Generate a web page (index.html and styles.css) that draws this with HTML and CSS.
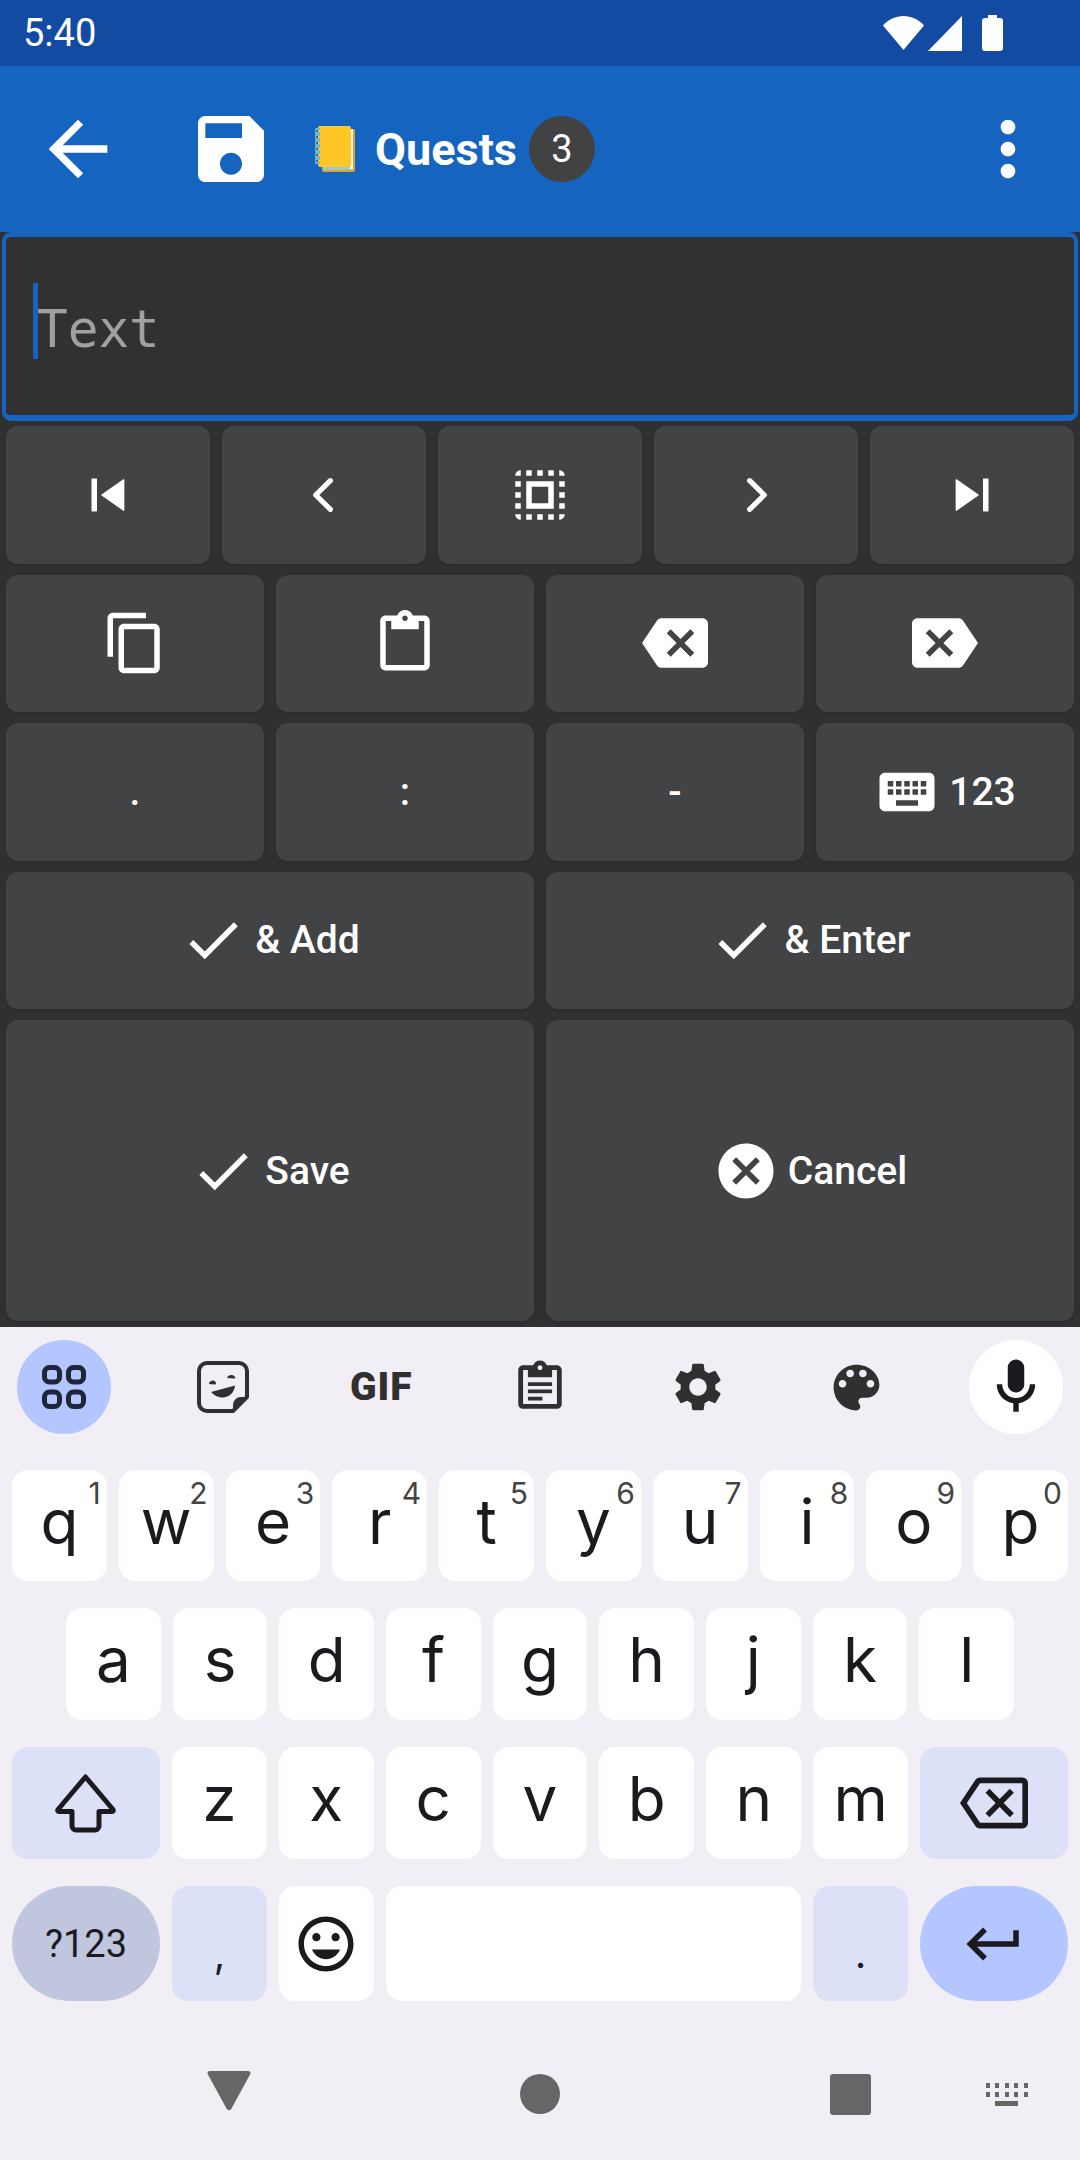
FILE: index.html
```html
<!DOCTYPE html>
<html lang="en">
<head>
<meta charset="utf-8">
<title>Quests</title>
<link rel="stylesheet" href="styles.css">
</head>
<body>
<div class="status">
  <span class="clock">5:40</span>
  <div class="status-icons">
    <svg class="st-wifi" viewBox="0 0 41 34"><path d="M0 9.500C5.500 3.500 12.500 0 20.500 0S35.500 3.500 41 9.500L20.500 34z"/></svg>
    <svg class="st-signal" viewBox="0 0 34 35"><path d="M34 0v35H0z"/></svg>
    <svg class="st-batt" viewBox="0 0 21 36"><path d="M6 0h9v3h3a3 3 0 0 1 3 3v27a3 3 0 0 1-3 3H3a3 3 0 0 1-3-3V6a3 3 0 0 1 3-3h3z"/></svg>
  </div>
</div>

<header class="appbar">
  <svg class="ic ic-88" viewBox="0 0 24 24"><path d="M20 11H7.830l5.590-5.590L12 4l-8 8 8 8 1.410-1.410L7.830 13H20v-2z"/></svg>
  <svg class="ic ic-88 save" viewBox="0 0 24 24"><path d="M17 3H5c-1.110 0-2 .9-2 2v14c0 1.100.89 2 2 2h14c1.100 0 2-.9 2-2V7l-4-4zm-5 16c-1.660 0-3-1.340-3-3s1.340-3 3-3 3 1.340 3 3-1.340 3-3 3zm3-10H5V5h10v4z"/></svg>
  <svg class="notebook" viewBox="0 0 41 48">
    <rect x="7" y="4" width="33" height="43" rx="2" fill="#e0a526"/>
    <rect x="8" y="38" width="30" height="7" fill="#9fc9cf"/>
    <rect x="35" y="4" width="3" height="40" fill="#f4f4f4"/>
    <rect x="3" y="1" width="33" height="41" rx="2" fill="#ffc627"/>
    <path d="M5 4H2a1.500 1.500 0 0 0 0 4h3M5 10H2a1.500 1.500 0 0 0 0 4h3M5 16H2a1.500 1.500 0 0 0 0 4h3M5 22H2a1.500 1.500 0 0 0 0 4h3M5 28H2a1.500 1.500 0 0 0 0 4h3M5 34H2a1.500 1.500 0 0 0 0 4h3" fill="none" stroke="#74b8c9" stroke-width="2"/>
  </svg>
  <h1 class="title">Quests</h1>
  <span class="badge">3</span>
  <svg class="ic ic-88 more" viewBox="0 0 24 24"><path d="M12 8c1.100 0 2-.9 2-2s-.9-2-2-2-2 .9-2 2 .9 2 2 2zm0 2c-1.100 0-2 .9-2 2s.9 2 2 2 2-.9 2-2-.9-2-2-2zm0 6c-1.100 0-2 .9-2 2s.9 2 2 2 2-.9 2-2-.9-2-2-2z"/></svg>
</header>

<main class="panel">
  <div class="editor"><span class="caret"></span><span class="placeholder">Text</span></div>
  <div class="pad">
    <div class="pad-row">
      <button class="btn"><svg class="ic ic-66" viewBox="0 0 24 24"><path class="soft" d="M6.250 6.250h1.500v11.500h-1.500zM9.800 12l7.900 5.500V6.500z"/></svg></button>
      <button class="btn"><svg class="ic ic-66" viewBox="0 0 24 24"><path class="chev" d="M14.300 6.800 9 12l5.300 5.200"/></svg></button>
      <button class="btn"><svg class="ic ic-66" viewBox="0 0 24 24"><path d="M3 5h2V3c-1.100 0-2 .9-2 2zm0 8h2v-2H3v2zm4 8h2v-2H7v2zM3 9h2V7H3v2zm10-6h-2v2h2V3zm6 0v2h2c0-1.100-.9-2-2-2zM5 21v-2H3c0 1.100.9 2 2 2zm-2-4h2v-2H3v2zM9 3H7v2h2V3zm2 18h2v-2h-2v2zm8-8h2v-2h-2v2zm0 8c1.100 0 2-.9 2-2h-2v2zm0-12h2V7h-2v2zm0 8h2v-2h-2v2zm-4 4h2v-2h-2v2zm0-16h2V3h-2v2zM7 17h10V7H7v10zm2-8h6v6H9V9z"/></svg></button>
      <button class="btn"><svg class="ic ic-66" viewBox="0 0 24 24"><path class="chev" d="M9.700 6.800 15 12l-5.300 5.200"/></svg></button>
      <button class="btn"><svg class="ic ic-66 flip" viewBox="0 0 24 24"><path class="soft" d="M6.250 6.250h1.500v11.500h-1.500zM9.800 12l7.900 5.500V6.500z"/></svg></button>
    </div>
    <div class="pad-row">
      <button class="btn"><svg class="ic ic-66" viewBox="0 0 24 24"><path d="M16 1H4c-1.100 0-2 .9-2 2v14h2V3h12V1zm3 4H8c-1.100 0-2 .9-2 2v14c0 1.100.9 2 2 2h11c1.100 0 2-.9 2-2V7c0-1.100-.9-2-2-2zm0 16H8V7h11v14z"/></svg></button>
      <button class="btn"><svg class="ic ic-66" viewBox="0 0 24 24"><path d="M19 2h-4.180C14.400.84 13.300 0 12 0c-1.300 0-2.400.84-2.820 2H5c-1.100 0-2 .9-2 2v16c0 1.100.9 2 2 2h14c1.100 0 2-.9 2-2V4c0-1.100-.9-2-2-2zm-7 0c.55 0 1 .45 1 1s-.45 1-1 1-1-.45-1-1 .45-1 1-1zm7 18H5V4h2v3h10V4h2v16z"/></svg></button>
      <button class="btn"><svg class="ic ic-66" viewBox="0 0 24 24"><path d="M22 3H7c-.69 0-1.230.35-1.590.88L0 12l5.410 8.110c.36.53.9.89 1.590.89h15c1.100 0 2-.9 2-2V5c0-1.100-.9-2-2-2zm-3 12.590L17.590 17 14 13.410 10.410 17 9 15.590 12.590 12 9 8.410 10.410 7 14 10.590 17.590 7 19 8.410 15.410 12 19 15.590z"/></svg></button>
      <button class="btn"><svg class="ic ic-66 flip" viewBox="0 0 24 24"><path d="M22 3H7c-.69 0-1.230.35-1.590.88L0 12l5.410 8.110c.36.53.9.89 1.590.89h15c1.100 0 2-.9 2-2V5c0-1.100-.9-2-2-2zm-3 12.590L17.590 17 14 13.410 10.410 17 9 15.590 12.590 12 9 8.410 10.410 7 14 10.590 17.590 7 19 8.410 15.410 12 19 15.590z"/></svg></button>
    </div>
    <div class="pad-row">
      <button class="btn">.</button>
      <button class="btn">:</button>
      <button class="btn">-</button>
      <button class="btn"><svg class="ic ic-66" viewBox="0 0 24 24"><path d="M20 5H4c-1.100 0-1.990.9-1.990 2L2 17c0 1.100.9 2 2 2h16c1.100 0 2-.9 2-2V7c0-1.100-.9-2-2-2zm-9 3h2v2h-2V8zm0 3h2v2h-2v-2zM8 8h2v2H8V8zm0 3h2v2H8v-2zm-1 2H5v-2h2v2zm0-3H5V8h2v2zm9 7H8v-2h8v2zm0-4h-2v-2h2v2zm0-3h-2V8h2v2zm3 3h-2v-2h2v2zm0-3h-2V8h2v2z"/></svg>123</button>
    </div>
    <div class="pad-row">
      <button class="btn"><svg class="ic ic-66" viewBox="0 0 24 24"><path d="M9 16.170 4.830 12l-1.420 1.410L9 19 21 7l-1.410-1.410z"/></svg>&amp; Add</button>
      <button class="btn"><svg class="ic ic-66" viewBox="0 0 24 24"><path d="M9 16.170 4.830 12l-1.420 1.410L9 19 21 7l-1.410-1.410z"/></svg>&amp; Enter</button>
    </div>
    <div class="pad-row pad-row-tall">
      <button class="btn"><svg class="ic ic-66" viewBox="0 0 24 24"><path d="M9 16.170 4.830 12l-1.420 1.410L9 19 21 7l-1.410-1.410z"/></svg>Save</button>
      <button class="btn"><svg class="ic ic-66" viewBox="0 0 24 24"><path d="M12 2C6.470 2 2 6.470 2 12s4.470 10 10 10 10-4.470 10-10S17.530 2 12 2zm5 13.590L15.590 17 12 13.410 8.410 17 7 15.590 10.590 12 7 8.410 8.410 7 12 10.590 15.590 7 17 8.410 13.410 12 17 15.590z"/></svg>Cancel</button>
    </div>
  </div>
</main>

<section class="keyboard">
  <div class="toolbar">
    <span class="tool tool-on">
      <svg class="grid-ic" viewBox="0 0 44 44"><rect x="2.500" y="2.500" width="15" height="14.500" rx="5"/><rect x="26.500" y="2.500" width="15" height="14.500" rx="5"/><rect x="2.500" y="27" width="15" height="14.500" rx="5"/><rect x="26.500" y="27" width="15" height="14.500" rx="5"/></svg>
    </span>
    <span class="tool">
      <svg class="sticker" viewBox="0 0 52 52"><path class="sticker-line" d="M10 2h32a8 8 0 0 1 8 8v26L36 50H10a8 8 0 0 1-8-8V10a8 8 0 0 1 8-8z"/><path d="M50 36 36 50v-6a8 8 0 0 1 8-8zM12 23c0-4 6-5 7-1 0 1-.5 1.500-1.500 1.500zM30 17c1-3.500 6-4 8-1 .5 1 0 1.500-1 1.500zM14 31l24-6.500c-.5 6.500-5.500 12-12.500 12C20.500 36.500 17 34 14 31z"/></svg>
    </span>
    <span class="tool"><span class="gif">GIF</span></span>
    <span class="tool">
      <svg class="ic-58 ink" viewBox="0 0 24 24"><path d="M19 3h-4.180C14.400 1.840 13.300 1 12 1c-1.300 0-2.400.84-2.820 2H5c-1.100 0-2 .9-2 2v14c0 1.100.9 2 2 2h14c1.100 0 2-.9 2-2V5c0-1.100-.9-2-2-2zm-7 0c.55 0 1 .45 1 1s-.45 1-1 1-1-.45-1-1 .45-1 1-1zm7 16H5V5h2v3h10V5h2v14zM7 10h10v1.600H7zM7 13h10v1.600H7zM7 16h6v1.600H7z"/></svg>
    </span>
    <span class="tool">
      <svg class="ic-58 ink nudge" viewBox="0 0 24 24"><path d="M19.140 12.940c.04-.3.06-.61.06-.94 0-.32-.02-.64-.07-.94l2.030-1.580c.18-.14.23-.41.12-.61l-1.920-3.320c-.12-.22-.37-.29-.59-.22l-2.390.96c-.5-.38-1.030-.7-1.620-.94L14.400 2.810c-.04-.24-.24-.41-.48-.41h-3.840c-.24 0-.43.17-.47.41L9.250 5.350c-.59.24-1.130.57-1.620.94l-2.390-.96c-.22-.08-.47 0-.59.22L2.740 8.870c-.12.21-.08.47.12.61l2.030 1.580c-.05.3-.09.63-.09.94s.02.64.07.94l-2.030 1.580c-.18.14-.23.41-.12.61l1.920 3.320c.12.22.37.29.59.22l2.390-.96c.5.38 1.030.7 1.620.94l.36 2.540c.05.24.24.41.48.41h3.840c.24 0 .44-.17.47-.41l.36-2.540c.59-.24 1.130-.56 1.620-.94l2.390.96c.22.08.47 0 .59-.22l1.920-3.320c.12-.22.07-.47-.12-.61l-2.010-1.580zM12 15.600c-1.980 0-3.600-1.620-3.600-3.600s1.620-3.600 3.600-3.600 3.600 1.620 3.600 3.600-1.620 3.600-3.600 3.600z"/></svg>
    </span>
    <span class="tool">
      <svg class="ic-61 ink nudge" viewBox="0 0 24 24"><path d="M12 3c-4.970 0-9 4.030-9 9s4.030 9 9 9c.83 0 1.500-.67 1.500-1.500 0-.39-.15-.74-.39-1.010-.23-.26-.38-.61-.38-.99 0-.83.67-1.500 1.500-1.500H16c2.760 0 5-2.240 5-5 0-4.420-4.030-8-9-8zm-5.500 9c-.83 0-1.500-.67-1.500-1.500S5.670 9 6.500 9 8 9.670 8 10.500 7.330 12 6.500 12zm3-4C8.670 8 8 7.330 8 6.500S8.670 5 9.500 5s1.500.67 1.500 1.500S10.330 8 9.500 8zm5 0c-.83 0-1.500-.67-1.500-1.500S13.670 5 14.500 5s1.500.67 1.500 1.500S15.330 8 14.500 8zm3 4c-.83 0-1.500-.67-1.500-1.500S16.670 9 17.500 9s1.500.67 1.500 1.500-.67 1.500-1.500 1.500z"/></svg>
    </span>
    <span class="tool tool-white">
      <svg class="ic-66 dark" viewBox="0 0 24 24"><path d="M12 14c1.660 0 3-1.340 3-3V5c0-1.660-1.340-3-3-3S9 3.340 9 5v6c0 1.660 1.340 3 3 3zM17 11c0 2.760-2.240 5-5 5s-5-2.240-5-5H5c0 3.530 2.610 6.430 6 6.920V21h2v-3.080c3.390-.49 6-3.390 6-6.920h-2z"/></svg>
    </span>
  </div>

  <div class="rows">
    <div class="row row-h1">
      <button class="key">q<sup class="num">1</sup></button>
      <button class="key">w<sup class="num">2</sup></button>
      <button class="key">e<sup class="num">3</sup></button>
      <button class="key">r<sup class="num">4</sup></button>
      <button class="key">t<sup class="num">5</sup></button>
      <button class="key">y<sup class="num">6</sup></button>
      <button class="key">u<sup class="num">7</sup></button>
      <button class="key">i<sup class="num">8</sup></button>
      <button class="key">o<sup class="num">9</sup></button>
      <button class="key">p<sup class="num">0</sup></button>
    </div>
    <div class="row row-h2 row-inset">
      <button class="key">a</button><button class="key">s</button><button class="key">d</button><button class="key">f</button><button class="key">g</button><button class="key">h</button><button class="key">j</button><button class="key">k</button><button class="key">l</button>
    </div>
    <div class="row row-h2">
      <button class="key key-wide key-fn"><svg class="shift" viewBox="0 0 61 59"><path d="M30.500 3 58 35.500c.6 1 .2 2-1 2H44V52a4 4 0 0 1-4 4H21a4 4 0 0 1-4-4V37.500H4c-1.200 0-1.600-1-1-2z"/></svg></button>
      <button class="key">z</button><button class="key">x</button><button class="key">c</button><button class="key">v</button><button class="key">b</button><button class="key">n</button><button class="key">m</button>
      <button class="key key-wide key-fn"><svg class="ic-68 dark" viewBox="0 0 24 24"><path d="M22 3H7c-.69 0-1.230.35-1.590.88L0 12l5.410 8.110c.36.53.9.89 1.590.89h15c1.100 0 2-.9 2-2V5c0-1.100-.9-2-2-2zm0 16H7.070L2.400 12l4.660-7H22v14zM10.410 17 14 13.410 17.590 17 19 15.590 15.410 12 19 8.410 17.590 7 14 10.590 10.410 7 9 8.410 12.590 12 9 15.590z"/></svg></button>
    </div>
    <div class="row row-h3">
      <button class="key key-wide key-sym">?123</button>
      <button class="key key-fn key-punct">,</button>
      <button class="key key-icon"><svg class="ic-66 dark" viewBox="0 0 24 24"><path d="M11.990 2C6.470 2 2 6.480 2 12s4.470 10 9.990 10C17.520 22 22 17.520 22 12S17.520 2 11.990 2zM12 20c-4.420 0-8-3.580-8-8s3.580-8 8-8 8 3.580 8 8-3.580 8-8 8zm3.500-9c.83 0 1.500-.67 1.500-1.500S16.330 8 15.500 8 14 8.670 14 9.500s.67 1.500 1.500 1.500zm-7 0c.83 0 1.500-.67 1.500-1.500S9.330 8 8.500 8 7 8.670 7 9.500 7.670 11 8.500 11zm3.500 6.500c2.330 0 4.310-1.460 5.110-3.500H6.890c.8 2.040 2.780 3.500 5.110 3.500z"/></svg></button>
      <button class="key key-space" aria-label="space"></button>
      <button class="key key-fn key-punct">.</button>
      <button class="key key-wide key-enter"><svg class="ic-66 dark" viewBox="0 0 24 24"><path d="M19 7v4H5.830l3.580-3.590L8 6l-6 6 6 6 1.410-1.410L5.830 13H21V7z"/></svg></button>
    </div>
  </div>

  <nav class="nav">
    <svg class="nav-back" viewBox="0 0 44 39"><path d="M3 0h38c2 0 3 1.500 2.200 3.300L24.500 37.500c-1 2-4 2-5 0L.8 3.300C0 1.500 1 0 3 0z"/></svg>
    <span class="nav-home"></span>
    <span class="nav-recent"></span>
    <svg class="nav-kbd" viewBox="0 0 42 23"><path d="M0 0h4v5H0zM9 0h4v5H9zM19 0h4v5h-4zM28 0h4v5h-4zM38 0h4v5h-4zM0 9h4v5H0zM9 9h4v5H9zM19 9h4v5h-4zM28 9h4v5h-4zM38 9h4v5h-4zM9 18h23v5H9z"/></svg>
  </nav>
</section>
</body>
</html>
```

FILE: styles.css
```css
* { box-sizing: border-box; }
html, body { margin: 0; padding: 0; }
body {
  width: 1080px;
  height: 2160px;
  overflow: hidden;
  background: #303030;
  font-family: Roboto, "Liberation Sans", sans-serif;
  color: #fff;
}
button { border: 0; padding: 0; margin: 0; font: inherit; color: inherit; }
svg { display: block; flex: none; }

.ic { fill: #fff; }
.ic-88 { width: 88px; height: 88px; }
.ic-66 { width: 66px; height: 66px; }
.ic-68 { width: 68px; height: 68px; }
.ic-58 { width: 58px; height: 58px; }
.ic-61 { width: 61px; height: 61px; }
.ink { fill: #303030; }
.nudge { margin-left: -2px; }
.dark { fill: #1b1b1f; }
.flip { transform: scaleX(-1); }
.chev { fill: none; stroke: #fff; stroke-width: 1.900; stroke-linecap: round; stroke-linejoin: round; }
.soft { stroke: #fff; stroke-width: .5; stroke-linejoin: round; }

/* Status bar */
.status {
  height: 66px;
  background: #134ba3;
  display: flex;
  align-items: center;
  justify-content: space-between;
  padding: 0 77px 0 23px;
}
.clock { font-size: 38px; line-height: 1; }
.status-icons { display: flex; align-items: center; fill: #fff; }
.st-wifi { width: 41px; height: 34px; }
.st-signal { width: 34px; height: 35px; margin-left: 4px; }
.st-batt { width: 21px; height: 36px; margin-left: 20px; }

/* App bar */
.appbar {
  height: 166px;
  background: #1565c0;
  display: flex;
  align-items: center;
  padding: 0 28px 0 34px;
}
.save { margin-left: 65px; }
.notebook { width: 41px; height: 48px; margin-left: 40px; }
.title { margin: 0 0 0 19px; font-size: 45px; font-weight: 700; line-height: 1; }
.badge {
  width: 66px;
  height: 66px;
  margin-left: 12px;
  border-radius: 50%;
  background: #424242;
  display: flex;
  align-items: center;
  justify-content: center;
  font-size: 38px;
}
.more { margin-left: auto; }

/* Editor */
.panel { height: 1095px; }
.editor {
  height: 189px;
  margin: 0 2px;
  border-style: solid;
  border-color: #1565c0;
  border-width: 5px 4px 6px;
  border-radius: 9px;
  background: #313131;
  display: flex;
  align-items: flex-start;
  padding: 46px 0 0 27px;
}
.caret { width: 5px; height: 76px; background: #1565c0; flex: none; }
.placeholder {
  margin: 9px 0 0 -1px;
  font-family: "DejaVu Sans Mono", "Liberation Mono", monospace;
  font-size: 51px;
  line-height: 76px;
  color: #a0a0a0;
}

/* Button pad */
.pad {
  display: flex;
  flex-direction: column;
  gap: 11px;
  padding: 5px 6px 0;
}
.pad-row { display: flex; gap: 12px; height: 137.500px; }
.pad-row-tall { height: 301px; }
.btn {
  flex: 1 1 0;
  min-width: 0;
  background: #424345;
  border-radius: 12px;
  box-shadow: 0 1px 2px rgba(0, 0, 0, .15);
  display: flex;
  align-items: center;
  justify-content: center;
  gap: 9px;
  font-size: 39px;
  font-weight: 500;
  color: #fff;
}

/* Keyboard */
.keyboard {
  height: 833px;
  background: #f1eff5;
  color: #1b1b1f;
  font-family: Inter, Roboto, sans-serif;
}
.toolbar {
  display: flex;
  justify-content: space-between;
  padding: 13px 17px 0;
}
.tool {
  width: 94px;
  height: 94px;
  border-radius: 50%;
  display: flex;
  align-items: center;
  justify-content: center;
}
.tool-on { background: #b3c6ff; }
.tool-white { background: #fff; }
.grid-ic { width: 44px; height: 44px; fill: none; stroke: #20253a; stroke-width: 5; }
.sticker { width: 52px; height: 52px; fill: #303030; }
.sticker-line { fill: none; stroke: #303030; stroke-width: 4; stroke-linejoin: round; }
.gif {
  font-family: Roboto, sans-serif;
  font-size: 39px;
  font-weight: 900;
  line-height: 1;
  letter-spacing: 1px;
  color: #303030;
}

.rows {
  display: flex;
  flex-direction: column;
  gap: 27px;
  padding: 36px 12px 0;
}
.row { display: flex; gap: 12px; }
.row-h1 { height: 111px; }
.row-h2 { height: 112px; }
.row-h3 { height: 115px; }
.row-inset { padding: 0 54px; }

.key {
  position: relative;
  flex: 1 1 0;
  min-width: 0;
  background: #fff;
  border-radius: 16px;
  display: flex;
  align-items: center;
  justify-content: center;
  padding-bottom: 8px;
  font-size: 62px;
  line-height: 1;
  color: #1b1b1f;
}
.num {
  position: absolute;
  top: 8px;
  right: 6px;
  font-size: 30px;
  line-height: 1;
  color: #444;
}
.key-wide { flex: 1.560 1 0; padding-bottom: 0; }
.key-fn { background: #dde1f7; }
.key-fn, .key-enter, .key-sym, .key-icon { padding-bottom: 0; }
.key-sym {
  background: #bfc6de;
  border-radius: 58px;
  font-family: Roboto, sans-serif;
  font-size: 38px;
}
.key-enter { background: #b3c6ff; border-radius: 58px; }
.key-punct { font-size: 40px; padding-top: 20px; }
.key-space { flex: 4.380 1 0; }
.shift { width: 61px; height: 59px; fill: none; stroke: #1b1b1f; stroke-width: 5; stroke-linejoin: round; }

/* Navigation */
.nav {
  display: flex;
  align-items: center;
  height: 132px;
  margin-top: 27px;
  padding-left: 207px;
}
.nav-back { width: 44px; height: 39px; margin-top: -7px; fill: #666; }
.nav-home { width: 40px; height: 40px; margin-left: 269px; border-radius: 50%; background: #666; }
.nav-recent { width: 41px; height: 41px; margin-left: 270px; border-radius: 3px; background: #666; }
.nav-kbd { width: 42px; height: 23px; margin-left: 115px; fill: #666; }
```
